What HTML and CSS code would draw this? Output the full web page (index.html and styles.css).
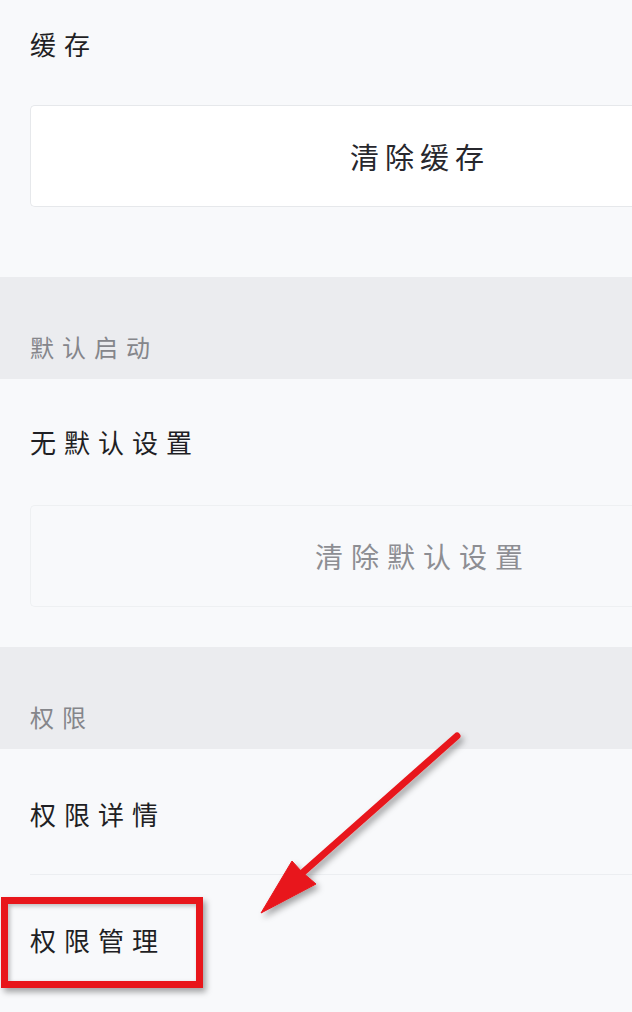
FILE: index.html
```html
<!DOCTYPE html>
<html lang="zh-CN">
<head>
  <meta charset="UTF-8" />
  <title>应用信息</title>
  <meta name="viewport" content="width=device-width,initial-scale=1" />
  <link rel="stylesheet" href="styles.css">
</head>
<body>

<div id="page">
  <!-- 缓存 -->
  <div class="group cache">
    <div class="item top">缓存</div>
    <div class="action-box">
      <span class="action">清除缓存</span>
    </div>
  </div>

  <div class="group-header">默认启动</div>

  <div class="group defaults">
    <div class="item mid">无默认设置</div>
    <div class="action-box disabled">
      <span class="action">清除默认设置</span>
    </div>
  </div>

  <div class="group-header">权限</div>

  <div class="group perms">
    <div class="item row">权限详情</div>
    <div class="item row">权限管理</div>
  </div>

  <!-- annotation -->
  <div class="mark-box"></div>
  <svg class="mark-arrow" width="632" height="1012" viewBox="0 0 632 1012">
    <defs>
      <filter id="sh" x="-20%" y="-20%" width="140%" height="140%">
        <feDropShadow dx="3" dy="4" stdDeviation="3" flood-color="#000" flood-opacity="0.35"/>
      </filter>
    </defs>
    <g filter="url(#sh)" fill="#e8161b" stroke="#e8161b">
      <line x1="457" y1="736" x2="300" y2="875" stroke-width="7" stroke-linecap="round"/>
      <polygon points="261,913 292,861 302,872 316,884" stroke-width="1" stroke-linejoin="round"/>
    </g>
  </svg>
</div>

</body>
</html>
```

FILE: styles.css
```css
body {
  margin:0; background:#f8f9fb; overflow:hidden;
  font-family:"Noto Sans CJK SC", "Noto Sans", sans-serif;
  color:#1f1f24;
}
#page { position:relative; width:632px; height:1012px; overflow:hidden; }

/* GROUPS */
.group { padding:0 0 0 30px; }
.cache { padding-bottom:70px; }
.defaults { padding-bottom:40px; }

.item {
  font-size:26px; line-height:26px; letter-spacing:8px;
}
.item.top { height:88px; padding-top:31px; box-sizing:border-box; margin-bottom:17px; }
.item.mid { height:126px; padding-top:50px; box-sizing:border-box; }
.item.row { height:125px; padding-top:52px; box-sizing:border-box; }
.item.row + .item.row { border-top:1px solid #eceef1; }

/* action buttons */
.action-box {
  height:102px; box-sizing:border-box;
  background:#fff; border:1px solid #e6e8eb; border-right:none;
  border-radius:5px 0 0 5px;
  display:flex; align-items:center;
  padding-left:319px;
}
.action { font-size:29px; line-height:30px; letter-spacing:6px; color:#27272d; }
.action-box.disabled { background:#f8f9fb; border-color:#eef0f2; padding-left:284px; }
.action-box.disabled .action { font-size:28px; letter-spacing:8px; color:#8d8e93; }

/* section header */
.group-header {
  height:102px; box-sizing:border-box;
  background:#ebecef; color:#85868b;
  padding:58px 0 0 30px;
  font-size:24px; line-height:24px; letter-spacing:8px;
}
.group-header + .perms { }

/* red annotation */
.mark-box {
  position:absolute; left:1px; top:897px;
  width:202px; height:91px; box-sizing:border-box;
  border:7px solid #e8161b;
  box-shadow:3px 4px 6px rgba(0,0,0,0.35), inset 2px 2px 4px rgba(0,0,0,0.25);
}
.mark-arrow { position:absolute; left:0; top:0; pointer-events:none; }
```
